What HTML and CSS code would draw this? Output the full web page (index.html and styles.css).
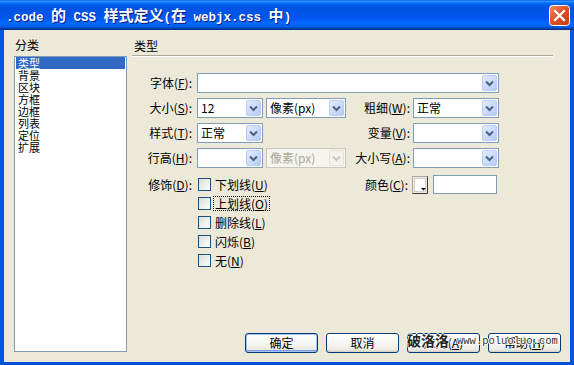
FILE: index.html
```html
<!DOCTYPE html>
<html>
<head>
<meta charset="utf-8">
<link rel="stylesheet" href="styles.css">
</head>
<body>
<div class="window">
  <div class="titlebar">
    <div class="title"><span class="lat">.code </span>的<span class="lat"> CSS </span>样式定义<span class="lat">(</span>在<span class="lat"> webjx.css </span>中<span class="lat">)</span></div>
    <div class="close">
      <svg width="21" height="21" viewBox="0 0 21 21">
        <defs>
          <linearGradient id="cg" x1="0" y1="0" x2="1" y2="1">
            <stop offset="0" stop-color="#F08A6A"/>
            <stop offset="0.45" stop-color="#E2542B"/>
            <stop offset="1" stop-color="#C23B12"/>
          </linearGradient>
        </defs>
        <rect x="0.5" y="0.5" width="20" height="20" rx="3" fill="url(#cg)" stroke="#FFFFFF"/>
        <path d="M6 6 L15 15 M15 6 L6 15" stroke="#FFFFFF" stroke-width="2.2" stroke-linecap="square"/>
      </svg>
    </div>
  </div>
  <div class="frame">
    <div class="client">
      <div class="category">
        <div class="cat-label">分类</div>
        <ul class="listbox">
          <li class="sel">类型</li>
          <li>背景</li>
          <li>区块</li>
          <li>方框</li>
          <li>边框</li>
          <li>列表</li>
          <li>定位</li>
          <li>扩展</li>
        </ul>
      </div>
      <div class="main">
        <div class="heading">类型</div>
        <div class="form">
          <div class="row">
            <div class="lbl">字体(<u>F</u>):</div>
            <div class="select w302"><span class="val"></span>
              <span class="arrow"><svg width="15" height="16" viewBox="0 0 15 16"><defs><linearGradient id="ag" x1="0" y1="0" x2="1" y2="1"><stop offset="0" stop-color="#E6EEFD"/><stop offset="1" stop-color="#B4C9F6"/></linearGradient></defs><rect x="0.5" y="0.5" width="14" height="15" rx="1.5" fill="url(#ag)" stroke="#BACCF4"/><path d="M4 6.5 L7.5 10 L11 6.5" fill="none" stroke="#4D6185" stroke-width="2"/></svg></span>
            </div>
          </div>
          <div class="row">
            <div class="lbl">大小(<u>S</u>):</div>
            <div class="select w66"><span class="val">12</span>
              <span class="arrow"><svg width="15" height="16" viewBox="0 0 15 16"><rect x="0.5" y="0.5" width="14" height="15" rx="1.5" fill="url(#ag)" stroke="#BACCF4"/><path d="M4 6.5 L7.5 10 L11 6.5" fill="none" stroke="#4D6185" stroke-width="2"/></svg></span>
            </div>
            <div class="select w80"><span class="val">像素(px)</span>
              <span class="arrow"><svg width="15" height="16" viewBox="0 0 15 16"><rect x="0.5" y="0.5" width="14" height="15" rx="1.5" fill="url(#ag)" stroke="#BACCF4"/><path d="M4 6.5 L7.5 10 L11 6.5" fill="none" stroke="#4D6185" stroke-width="2"/></svg></span>
            </div>
            <div class="lbl2">粗细(<u>W</u>):</div>
            <div class="select w86"><span class="val">正常</span>
              <span class="arrow"><svg width="15" height="16" viewBox="0 0 15 16"><rect x="0.5" y="0.5" width="14" height="15" rx="1.5" fill="url(#ag)" stroke="#BACCF4"/><path d="M4 6.5 L7.5 10 L11 6.5" fill="none" stroke="#4D6185" stroke-width="2"/></svg></span>
            </div>
          </div>
          <div class="row">
            <div class="lbl">样式(<u>T</u>):</div>
            <div class="select w66"><span class="val">正常</span>
              <span class="arrow"><svg width="15" height="16" viewBox="0 0 15 16"><rect x="0.5" y="0.5" width="14" height="15" rx="1.5" fill="url(#ag)" stroke="#BACCF4"/><path d="M4 6.5 L7.5 10 L11 6.5" fill="none" stroke="#4D6185" stroke-width="2"/></svg></span>
            </div>
            <div class="spacer"></div>
            <div class="lbl2">变量(<u>V</u>):</div>
            <div class="select w86"><span class="val"></span>
              <span class="arrow"><svg width="15" height="16" viewBox="0 0 15 16"><rect x="0.5" y="0.5" width="14" height="15" rx="1.5" fill="url(#ag)" stroke="#BACCF4"/><path d="M4 6.5 L7.5 10 L11 6.5" fill="none" stroke="#4D6185" stroke-width="2"/></svg></span>
            </div>
          </div>
          <div class="row">
            <div class="lbl">行高(<u>H</u>):</div>
            <div class="select w66"><span class="val"></span>
              <span class="arrow"><svg width="15" height="16" viewBox="0 0 15 16"><rect x="0.5" y="0.5" width="14" height="15" rx="1.5" fill="url(#ag)" stroke="#BACCF4"/><path d="M4 6.5 L7.5 10 L11 6.5" fill="none" stroke="#4D6185" stroke-width="2"/></svg></span>
            </div>
            <div class="select w80 disabled"><span class="val">像素(px)</span>
              <span class="arrow"><svg width="15" height="16" viewBox="0 0 15 16"><rect x="0.5" y="0.5" width="14" height="15" rx="1.5" fill="#F3F2EC" stroke="#E3E1D6"/><path d="M4 6.5 L7.5 10 L11 6.5" fill="none" stroke="#C9C7BA" stroke-width="2"/></svg></span>
            </div>
            <div class="lbl2">大小写(<u>A</u>):</div>
            <div class="select w86"><span class="val"></span>
              <span class="arrow"><svg width="15" height="16" viewBox="0 0 15 16"><rect x="0.5" y="0.5" width="14" height="15" rx="1.5" fill="url(#ag)" stroke="#BACCF4"/><path d="M4 6.5 L7.5 10 L11 6.5" fill="none" stroke="#4D6185" stroke-width="2"/></svg></span>
            </div>
          </div>
          <div class="row decor">
            <div class="lbl">修饰(<u>D</u>):</div>
            <div class="checks">
              <div class="check"><span class="box"></span><span class="ctext">下划线(<u>U</u>)</span></div>
              <div class="check"><span class="box"></span><span class="ctext focus">上划线(<u>O</u>)</span></div>
              <div class="check"><span class="box"></span><span class="ctext">删除线(<u>L</u>)</span></div>
              <div class="check"><span class="box"></span><span class="ctext">闪烁(<u>B</u>)</span></div>
              <div class="check"><span class="box"></span><span class="ctext">无(<u>N</u>)</span></div>
            </div>
            <div class="color-lbl">颜色(<u>C</u>):</div>
            <div class="swatch">
              <svg width="16" height="18" viewBox="0 0 16 18">
                <rect x="0.5" y="0.5" width="15" height="17" fill="#ECE9D8" stroke="#A7A6AA"/>
                <rect x="2.5" y="2.5" width="11" height="13" fill="#FFFFFF" stroke="#D4D0C8"/>
                <path d="M15.5 0.5 V17.5 H0.5" fill="none" stroke="#404040"/>
                <path d="M9 12 H14 L11.5 14.5 Z" fill="#000000"/>
              </svg>
            </div>
            <div class="cinput"></div>
          </div>
        </div>
        <div class="buttons">
          <div class="btn default">确定</div>
          <div class="btn">取消</div>
          <div class="btn">应用(<u>A</u>)</div>
          <div class="btn">帮助(<u>H</u>)</div>
          <div class="watermark"><span class="wm-cn">破洛洛</span><span class="wm-en">www.poluoluo.com</span></div>
        </div>
      </div>
    </div>
  </div>
</div>
</body>
</html>
```
FILE: styles.css
```css
* {
  box-sizing: border-box;
  margin: 0;
  padding: 0;
}
html, body {
  width: 574px;
  height: 365px;
  overflow: hidden;
}
body {
  font: 12px/14px "Noto Sans CJK SC", "Liberation Sans", sans-serif;
  color: #000;
  background: #ECE9D8;
}
u {
  text-decoration: underline;
}
.window {
  width: 574px;
  height: 365px;
  display: flex;
  flex-direction: column;
}
.titlebar {
  height: 30px;
  flex: none;
  display: flex;
  align-items: center;
  justify-content: space-between;
  padding: 0 4px 0 6px;
  background: linear-gradient(to bottom, #0058EE 0%, #3593FF 4%, #288EFF 6%, #127DFF 8%, #036FFC 10%, #0262EE 14%, #0057E5 20%, #0054E3 24%, #0055EB 56%, #005BF5 66%, #026AFE 76%, #0062EF 86%, #0052D6 92%, #0040AB 94%, #003092 100%);
}
.title {
  color: #fff;
  font-weight: bold;
  font-size: 15px;
  line-height: 18px;
  white-space: pre;
  text-shadow: 1px 1px #0A1883;
  padding-top: 2px;
}
.lat {
  font-family: "Liberation Mono", monospace;
  font-size: 12.5px;
}
.close {
  width: 21px;
  height: 21px;
  display: flex;
}
.frame {
  flex: 1;
  display: flex;
  border-left: 4px solid #0054E3;
  border-right: 4px solid #0054E3;
  border-bottom: 3px solid #0050D8;
}
.client {
  flex: 1;
  display: flex;
  background: #ECE9D8;
}
.category {
  width: 113px;
  margin-left: 10px;
  display: flex;
  flex-direction: column;
  flex: none;
}
.cat-label {
  height: 26px;
  padding: 8px 0 0 1px;
}
.listbox {
  list-style: none;
  height: 296px;
  border: 1px solid #7F9DB9;
  background: #fff;
  padding: 0 1px;
}
.listbox li {
  height: 12px;
  font-size: 11px;
  line-height: 12px;
  padding-left: 2px;
}
.listbox li.sel {
  background: #316AC5;
  color: #fff;
}
.main {
  flex: 1;
  margin-left: 5px;
  display: flex;
  flex-direction: column;
  padding-right: 9px;
  padding-bottom: 9px;
}
.heading {
  height: 26px;
  padding: 9px 0 0 2px;
  margin-right: 8px;
  border-bottom: 1px solid #ACA899;
  box-shadow: 0 1px #fff;
}
.form {
  margin-top: 17px;
  display: flex;
  flex-direction: column;
  gap: 5px;
}
.row {
  display: flex;
  height: 20px;
  align-items: center;
}
.lbl {
  width: 65px;
  flex: none;
  padding-right: 5px;
  text-align: right;
  white-space: nowrap;
}
.lbl2 {
  width: 67px;
  flex: none;
  padding-right: 3px;
  text-align: right;
  white-space: nowrap;
}
.select {
  display: flex;
  flex: none;
  height: 20px;
  border: 1px solid #7F9DB9;
  background: #fff;
  padding: 1px;
}
.select .val {
  flex: 1;
  padding-left: 2px;
  line-height: 16px;
  white-space: nowrap;
  overflow: hidden;
}
.select .arrow {
  width: 15px;
  height: 16px;
  display: flex;
}
.select.disabled {
  border-color: #C9C7BA;
  background: #F5F4EE;
}
.select.disabled .val {
  color: #ACA899;
}
.w302 { width: 302px; }
.w66 { width: 66px; }
.w80 { width: 80px; margin-left: 3px; }
.w86 { width: 86px; }
.spacer {
  width: 83px;
  flex: none;
}
.row.decor {
  height: auto;
  align-items: flex-start;
  margin-top: 2px;
}
.decor .lbl {
  line-height: 19px;
}
.checks {
  width: 149px;
  flex: none;
  padding-left: 1px;
  display: flex;
  flex-direction: column;
}
.check {
  height: 19px;
  display: flex;
  align-items: center;
  gap: 3px;
}
.box {
  width: 13px;
  height: 13px;
  border: 1px solid #1C5180;
  background: linear-gradient(135deg, #DCDCD7 0%, #F4F4F1 70%, #FFFFFF 100%);
}
.ctext {
  line-height: 13px;
  padding: 0 1px;
}
.ctext.focus {
  outline: 1px dotted #000;
}
.color-lbl {
  width: 66px;
  flex: none;
  padding-right: 4px;
  text-align: right;
  line-height: 19px;
  white-space: nowrap;
}
.swatch {
  width: 16px;
  height: 18px;
  margin-top: 1px;
  display: flex;
}
.cinput {
  width: 64px;
  height: 19px;
  margin-left: 5px;
  border: 1px solid #7F9DB9;
  background: #fff;
}
.buttons {
  margin-top: auto;
  display: flex;
  justify-content: flex-end;
  gap: 8px;
  position: relative;
}
.btn {
  width: 73px;
  height: 20px;
  border: 1px solid #003C74;
  border-radius: 3px;
  background: linear-gradient(to bottom, #FFFFFF 0%, #F7F7F4 45%, #ECEBE6 85%, #D6D0C5 100%);
  text-align: center;
  line-height: 18px;
  white-space: nowrap;
}
.btn.default {
  box-shadow: inset 0 0 0 1px #A9C3EF, inset 0 -1px 0 1px #7F9EE4;
}
.watermark {
  position: absolute;
  left: 275px;
  top: -2px;
  display: flex;
  align-items: flex-end;
  pointer-events: none;
}
.wm-cn {
  font-size: 14px;
  line-height: 18px;
  font-weight: bold;
  color: #222;
  text-shadow: 1px 0 #fff, -1px 0 #fff, 0 1px #fff, 0 -1px #fff;
}
.wm-en {
  margin-left: 8px;
  font-family: "Liberation Mono", monospace;
  font-size: 10.5px;
  line-height: 16px;
  color: #333;
  text-shadow: 1px 0 #fff, -1px 0 #fff, 0 1px #fff, 0 -1px #fff;
}
```
